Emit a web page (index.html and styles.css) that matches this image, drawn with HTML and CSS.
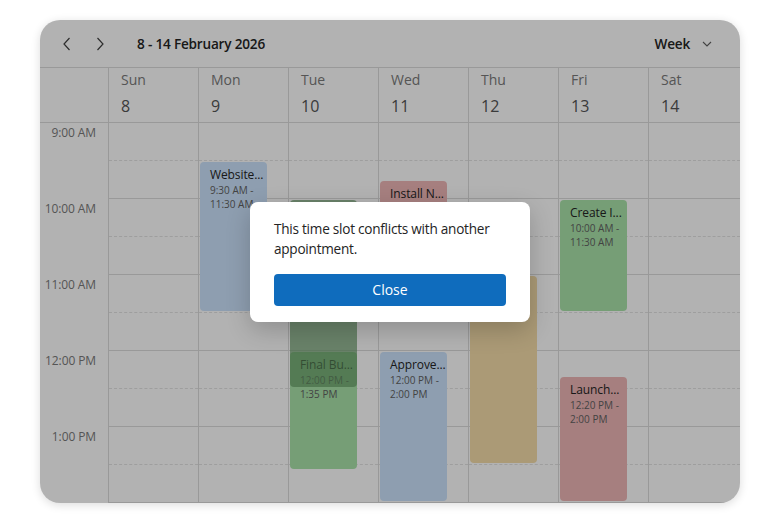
FILE: index.html
```html
<!DOCTYPE html>
<html lang="en">

<head>
    <meta charset="UTF-8">
    <meta name="viewport" content="width=device-width, initial-scale=1.0">
    <title>Week Schedule</title>
    <link rel="stylesheet" href="styles.css">
</head>

<body>
    <div class="page">
        <div class="scheduler">
            <div class="toolbar">
                <button class="nav-btn" title="Previous week">
                    <svg width="8" height="14" viewBox="0 0 8 14"><path d="M6.5 1 L1 7 L6.5 13" fill="none" stroke="currentColor" stroke-width="1.2"/></svg>
                </button>
                <button class="nav-btn" title="Next week">
                    <svg width="8" height="14" viewBox="0 0 8 14"><path d="M1.5 1 L7 7 L1.5 13" fill="none" stroke="currentColor" stroke-width="1.2"/></svg>
                </button>
                <span class="range">8 - 14 February 2026</span>
                <button class="view-btn">Week
                    <svg width="10" height="6" viewBox="0 0 10 6"><path d="M1 1 L5 5 L9 1" fill="none" stroke="currentColor" stroke-width="1.1"/></svg>
                </button>
            </div>

            <div class="day-header">
                <div class="corner"></div>
                <div class="day"><span class="day-name">Sun</span><span class="day-num">8</span></div>
                <div class="day"><span class="day-name">Mon</span><span class="day-num">9</span></div>
                <div class="day"><span class="day-name">Tue</span><span class="day-num">10</span></div>
                <div class="day"><span class="day-name">Wed</span><span class="day-num">11</span></div>
                <div class="day"><span class="day-name">Thu</span><span class="day-num">12</span></div>
                <div class="day"><span class="day-name">Fri</span><span class="day-num">13</span></div>
                <div class="day"><span class="day-name">Sat</span><span class="day-num">14</span></div>
            </div>

            <div class="grid" id="grid">
                <div class="times">
                    <div class="time">9:00 AM</div>
                    <div class="time">10:00 AM</div>
                    <div class="time">11:00 AM</div>
                    <div class="time">12:00 PM</div>
                    <div class="time">1:00 PM</div>
                </div>
            </div>

            <div class="overlay">
                <div class="dialog">
                    <p class="dialog-text">This time slot conflicts with another appointment.</p>
                    <button class="close-btn">Close</button>
                </div>
            </div>
        </div>
    </div>

    <script>
        // minutes from 9:00, 76px per hour
        const HOUR = 76;
        const appointments = [
            { day: 1, title: 'Website...', start: 30, end: 150, time: ['9:30 AM -', '11:30 AM'], color: 'blue' },
            { day: 3, title: 'Install N...', start: 45, end: 120, time: ['9:45 AM -', '11:00 AM'], color: 'red' },
            { day: 2, title: 'Final Bu...', start: 180, end: 275, time: ['12:00 PM -', '1:35 PM'], color: 'green' },
            { day: 2, title: '', start: 60, end: 210, time: [], color: 'drag' },
            { day: 3, title: 'Approve...', start: 180, end: 300, time: ['12:00 PM -', '2:00 PM'], color: 'blue' },
            { day: 4, title: 'Review...', start: 120, end: 270, time: ['11:00 AM -', '1:30 PM'], color: 'tan' },
            { day: 5, title: 'Create I...', start: 60, end: 150, time: ['10:00 AM -', '11:30 AM'], color: 'green' },
            { day: 5, title: 'Launch...', start: 200, end: 300, time: ['12:20 PM -', '2:00 PM'], color: 'red' }
        ];

        const grid = document.getElementById('grid');
        const columns = [];

        for (let d = 0; d < 7; d++) {
            const col = document.createElement('div');
            col.className = 'day-col';
            for (let s = 0; s < 10; s++) {
                const slot = document.createElement('div');
                slot.className = s % 2 === 0 ? 'slot half' : 'slot';
                col.appendChild(slot);
            }
            grid.appendChild(col);
            columns.push(col);
        }

        appointments.forEach(a => {
            const el = document.createElement('div');
            el.className = `appt ${a.color}`;
            el.style.top = `${Math.round(a.start * HOUR / 60) + 1}px`;
            el.style.height = `${Math.round((a.end - a.start) * HOUR / 60) - 3}px`;
            if (a.title) {
                el.innerHTML = `<div class="appt-title">${a.title}</div>` +
                    a.time.map(t => `<div class="appt-time">${t}</div>`).join('');
            }
            columns[a.day].appendChild(el);
        });
    </script>
</body>

</html>
```

FILE: styles.css
```css
* {
    box-sizing: border-box;
}

body {
    margin: 0;
    background: #fff;
    font-family: "Open Sans", "Noto Sans", sans-serif;
    color: #242424;
}

.page {
    padding: 20px 40px;
}

.scheduler {
    position: relative;
    width: 700px;
    height: 483px;
    background: #fff;
    border-radius: 20px;
    overflow: hidden;
    box-shadow: 0 2px 10px rgba(0, 0, 0, 0.14);
    display: flex;
    flex-direction: column;
}

.toolbar {
    height: 48px;
    flex-shrink: 0;
    display: flex;
    align-items: center;
    padding: 0 20px 0 11px;
    border-bottom: 1px solid #dcdcdc;
}

.nav-btn {
    width: 32px;
    height: 32px;
    padding: 0;
    border: none;
    background: none;
    color: #424242;
    display: flex;
    align-items: center;
    justify-content: center;
}

.nav-btn + .nav-btn {
    margin-left: 1px;
}

.range {
    margin-left: 21px;
    font-size: 13.6px;
    font-weight: 600;
    letter-spacing: -0.2px;
}

.view-btn {
    margin-left: auto;
    border: none;
    background: none;
    padding: 0 8px;
    display: flex;
    align-items: center;
    gap: 12px;
    font-family: inherit;
    font-size: 13.6px;
    font-weight: 600;
    letter-spacing: -0.2px;
    color: #242424;
}

.view-btn svg {
    color: #616161;
}

.day-header {
    height: 55px;
    flex-shrink: 0;
    display: grid;
    grid-template-columns: 68px repeat(6, 90px) 1fr;
    border-bottom: 1px solid #dcdcdc;
}

.day {
    border-left: 1px solid #dcdcdc;
    padding: 2px 12px 0;
    display: flex;
    flex-direction: column;
}

.day-name {
    font-size: 14px;
    line-height: 20px;
    color: #7a7a7a;
}

.day-num {
    margin-top: 4px;
    font-size: 16px;
    line-height: 24px;
    color: #555;
}

.grid {
    flex: 1;
    display: grid;
    grid-template-columns: 68px repeat(6, 90px) 1fr;
}

.time {
    height: 76px;
    padding: 2px 12px 0 0;
    text-align: right;
    font-size: 12px;
    line-height: 16px;
    letter-spacing: -0.1px;
    color: #7a7a7a;
}

.day-col {
    position: relative;
    border-left: 1px solid #dcdcdc;
}

.slot {
    height: 38px;
    border-bottom: 1px solid #dcdcdc;
}

.slot.half {
    border-bottom: 1px dashed #e2e2e2;
}

.appt {
    position: absolute;
    left: 1px;
    width: 67px;
    border-radius: 4px;
    padding: 5px 6px 0 10px;
    overflow: hidden;
}

.appt-title {
    font-size: 12px;
    line-height: 16px;
    letter-spacing: -0.1px;
    color: #242424;
    white-space: nowrap;
}

.appt-time {
    font-size: 10px;
    line-height: 14px;
    color: #616161;
    white-space: nowrap;
}

.appt.blue {
    background: #cce3fc;
}

.appt.green {
    background: #a9e3aa;
}

.appt.red {
    background: #eeb6b6;
}

.appt.tan {
    background: #f5dda9;
}

.appt.drag {
    background: rgba(96, 150, 96, 0.65);
}

.overlay {
    position: absolute;
    inset: 0;
    background: rgba(0, 0, 0, 0.3);
    display: flex;
    align-items: center;
    justify-content: center;
}

.dialog {
    width: 280px;
    background: #fff;
    border-radius: 8px;
    padding: 17px 24px 16px;
    box-shadow: 0 8px 24px rgba(0, 0, 0, 0.2);
}

.dialog-text {
    margin: 0;
    font-size: 13.6px;
    line-height: 20px;
    letter-spacing: -0.25px;
    color: #242424;
}

.close-btn {
    display: block;
    width: 100%;
    height: 32px;
    margin-top: 15px;
    border: none;
    border-radius: 4px;
    background: #0f6cbd;
    color: #fff;
    font-family: inherit;
    font-size: 14px;
    font-weight: 500;
}
```
